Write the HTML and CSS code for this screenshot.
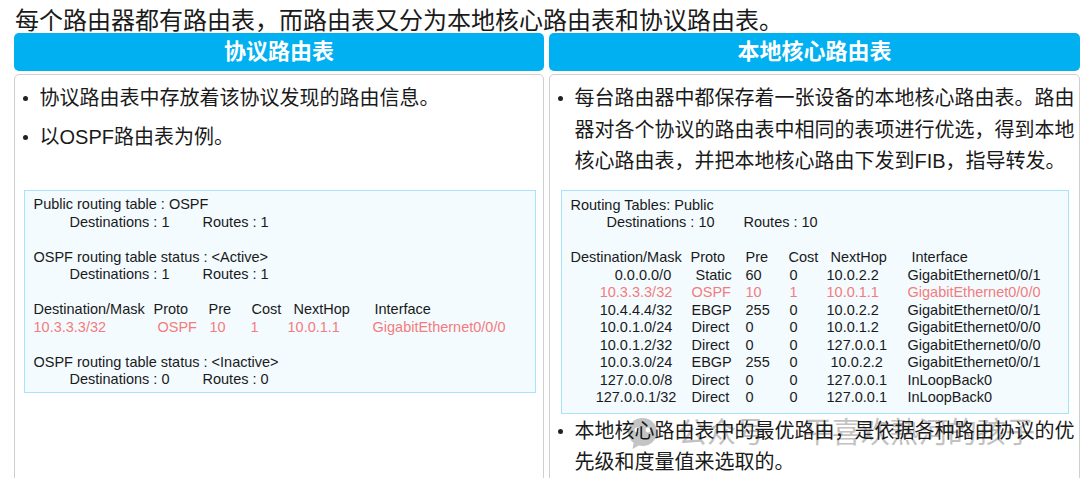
FILE: index.html
```html
<!DOCTYPE html>
<html lang="zh-CN">
<head>
<meta charset="utf-8">
<title>路由表</title>
<link rel="stylesheet" href="styles.css">
</head>
<body>
<h1 class="title">每个路由器都有路由表，而路由表又分为本地核心路由表和协议路由表。</h1>
<main class="columns">
  <section class="col">
    <h2 class="bar">协议路由表</h2>
    <div class="panel">
      <ul class="bullets loose">
        <li>协议路由表中存放着该协议发现的路由信息。</li>
        <li>以OSPF路由表为例。</li>
      </ul>
      <div class="box box-left">
        <p>Public routing table : OSPF</p>
        <p class="stat"><span>Destinations : 1</span><span>Routes : 1</span></p>
        <p class="gap">OSPF routing table status : &lt;Active&gt;</p>
        <p class="stat"><span>Destinations : 1</span><span>Routes : 1</span></p>
        <div class="gap rows rows-left">
          <span>Destination/Mask</span><span>Proto</span><span>Pre</span><span>Cost</span><span>NextHop</span><span>Interface</span>
        </div>
        <div class="rows rows-left-data red">
          <span>10.3.3.3/32</span><span>OSPF</span><span>10</span><span>1</span><span>10.0.1.1</span><span>GigabitEthernet0/0/0</span>
        </div>
        <p class="gap">OSPF routing table status : &lt;Inactive&gt;</p>
        <p class="stat"><span>Destinations : 0</span><span>Routes : 0</span></p>
      </div>
    </div>
  </section>
  <section class="col">
    <h2 class="bar">本地核心路由表</h2>
    <div class="panel">
      <ul class="bullets">
        <li>每台路由器中都保存着一张设备的本地核心路由表。路由器对各个协议的路由表中相同的表项进行优选，得到本地核心路由表，并把本地核心路由下发到FIB，指导转发。</li>
      </ul>
      <div class="box box-right">
        <p>Routing Tables: Public</p>
        <p class="stat stat-right"><span>Destinations : 10</span><span>Routes : 10</span></p>
        <div class="gap rows rows-head">
          <span>Destination/Mask</span><span>Proto</span><span>Pre</span><span>Cost</span><span>NextHop</span><span>Interface</span>
        </div>
        <div class="rows rows-data"><span class="short">0.0.0.0/0</span><span class="nudge">Static</span><span>60</span><span>0</span><span>10.0.2.2</span><span>GigabitEthernet0/0/1</span></div>
        <div class="rows rows-data red"><span>10.3.3.3/32</span><span>OSPF</span><span>10</span><span>1</span><span>10.0.1.1</span><span>GigabitEthernet0/0/0</span></div>
        <div class="rows rows-data"><span>10.4.4.4/32</span><span>EBGP</span><span>255</span><span>0</span><span>10.0.2.2</span><span>GigabitEthernet0/0/1</span></div>
        <div class="rows rows-data"><span>10.0.1.0/24</span><span>Direct</span><span>0</span><span>0</span><span>10.0.1.2</span><span>GigabitEthernet0/0/0</span></div>
        <div class="rows rows-data"><span>10.0.1.2/32</span><span>Direct</span><span>0</span><span>0</span><span>127.0.0.1</span><span>GigabitEthernet0/0/0</span></div>
        <div class="rows rows-data"><span>10.0.3.0/24</span><span>EBGP</span><span>255</span><span>0</span><span class="nudge">10.0.2.2</span><span>GigabitEthernet0/0/1</span></div>
        <div class="rows rows-data"><span>127.0.0.0/8</span><span>Direct</span><span>0</span><span>0</span><span>127.0.0.1</span><span>InLoopBack0</span></div>
        <div class="rows rows-data"><span>127.0.0.1/32</span><span>Direct</span><span>0</span><span>0</span><span>127.0.0.1</span><span>InLoopBack0</span></div>
      </div>
      <ul class="bullets after">
        <li>本地核心路由表中的最优路由，是依据各种路由协议的优先级和度量值来选取的。</li>
      </ul>
    </div>
  </section>
</main>
<div class="watermark">
  <svg class="wm-icon" width="31" height="33" viewBox="0 0 31 33" aria-hidden="true">
    <path d="M15.500 1C7.500 1 1 7.200 1 15c0 4.500 2.200 8.500 5.600 11L5.500 32l6.300-3.400c1.200.3 2.400.4 3.700.4 8 0 14.500-6.200 14.500-14S23.500 1 15.500 1z" fill="#c4c4c4"/>
    <circle cx="10" cy="13" r="2.400" fill="#fff"/><circle cx="21" cy="13" r="2.400" fill="#fff"/>
  </svg>
  <span class="wm-text">公众号 · 平喜欢熟河的孩子</span>
</div>
</body>
</html>
```
FILE: styles.css
```css
html, body { margin: 0; padding: 0; }
body {
  width: 1080px;
  height: 478px;
  overflow: hidden;
  position: relative;
  background: #fff;
  color: #1a1a1a;
  font-family: "Liberation Sans", "Noto Sans CJK SC", sans-serif;
}
.title {
  margin: 0;
  padding: 8px 0 0 15px;
  height: 25px;
  font-size: 24px;
  line-height: 25px;
  font-weight: 400;
  white-space: nowrap;
}
.columns {
  position: relative;
  z-index: 1;
  display: grid;
  grid-template-columns: 530px 531px;
  column-gap: 5px;
  padding-left: 14px;
}
.col { display: flex; flex-direction: column; gap: 3px; }
.bar {
  margin: 0;
  height: 38px;
  border-radius: 5px;
  background: #00b0f0;
  color: #fff;
  text-align: center;
  font-size: 22px;
  line-height: 38px;
  font-weight: 700;
}
.panel {
  height: 420px;
  box-sizing: border-box;
  border: 1.5px solid #cfcfcf;
  border-radius: 5px;
  padding: 8px 3px 0 8.5px;
}
.bullets {
  margin: 0;
  padding: 0 0 0 16px;
  list-style: none;
  font-size: 20px;
  line-height: 31.5px;
}
.bullets li { position: relative; }
.bullets li::before {
  content: "";
  position: absolute;
  left: -17px;
  top: 13px;
  width: 5px;
  height: 5px;
  border-radius: 50%;
  background: #222;
}
.loose li + li { margin-top: 7px; }
.box {
  box-sizing: border-box;
  border: 1px solid #a9e3f9;
  background: #f3fbff;
  font-size: 14.5px;
  line-height: 17.5px;
  padding: 5px 0 0 9px;
  white-space: nowrap;
}
.box p { margin: 0; }
.box-left { margin-top: 37px; height: 203px; width: 512px; }
.box-right { margin: 12px 0 0 2px; padding-top: 6px; height: 224px; width: 508px; }
.gap { margin-top: 17.5px !important; }
.stat { display: flex; padding-left: 36px; }
.stat span:first-child { width: 133px; }
.stat-right span:first-child { width: 137px; }
.red { color: #f47c7c; }
.rows { display: grid; }
.rows-left { grid-template-columns: 120px 55px 43px 42px 81px auto; }
.rows-left-data { grid-template-columns: 124px 52px 41px 37px 85px auto; }
.rows-head { grid-template-columns: 120px 55px 43px 42px 81px auto; }
.rows-data { grid-template-columns: 121px 54px 44px 37px 81px auto; }
.rows-data span:first-child { text-align: center; padding-left: 10px; }
.rows-data span.short:first-child { padding-left: 24px; }
.nudge { padding-left: 4px; }
.after { margin-top: 2px; }
.watermark {
  position: absolute;
  left: 627px;
  top: 417px;
  display: flex;
  align-items: center;
  gap: 20px;
  color: #c2c2c2;
  white-space: nowrap;
}
.wm-text { font-size: 29px; line-height: 33px; word-spacing: 6px; }
```
